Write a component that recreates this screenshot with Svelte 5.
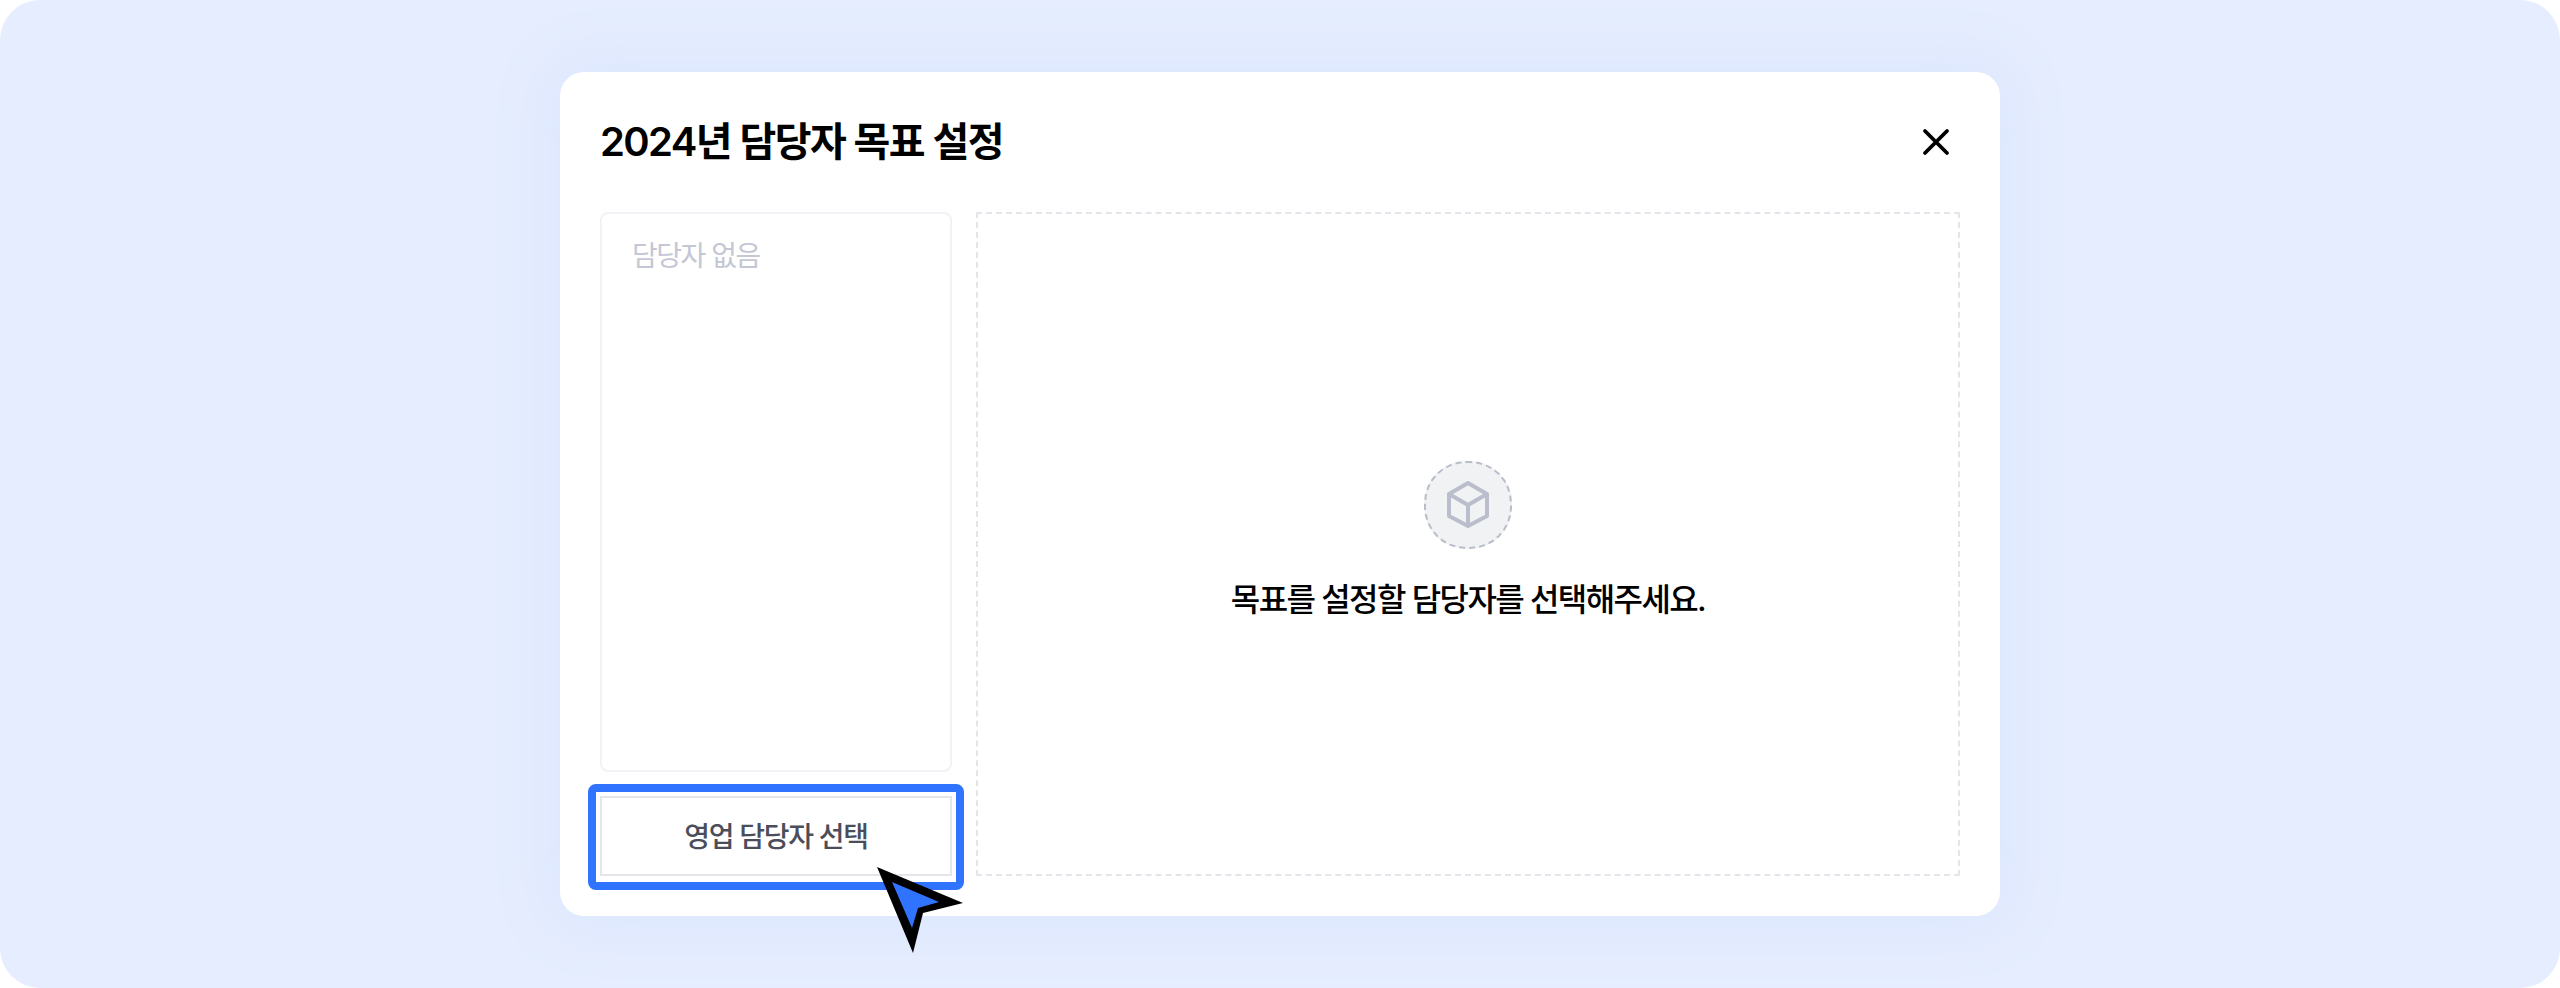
<script lang="ts">
	const title = '2024년 담당자 목표 설정';
</script>

<main class="stage">
	<section class="modal">
		<header>
			<h1>{title}</h1>
			<button class="close" aria-label="닫기">
				<svg width="32" height="32" viewBox="0 0 32 32" fill="none">
					<path d="M5 5 L27 27 M27 5 L5 27" stroke="#000" stroke-width="3.8" stroke-linecap="round" />
				</svg>
			</button>
		</header>

		<div class="body">
			<div class="left">
				<div class="list">담당자 없음</div>
				<button class="pick">영업 담당자 선택</button>
			</div>

			<div class="detail">
				<div class="badge">
					<svg width="46" height="50" viewBox="0 0 46 50" fill="none">
						<path d="M23 3 L42 14 V36 L23 46 L4 36 V14 Z M4 14 L23 25 L42 14 M23 25 V46" stroke="#BABDCB" stroke-width="4" stroke-linejoin="round" />
					</svg>
				</div>
				<p>목표를 설정할 담당자를 선택해주세요.</p>
			</div>
		</div>

		<svg class="cursor" width="100" height="100" viewBox="0 0 100 100">
			<path d="M7 7 L93 43 L53 53 L43 93 Z" fill="#000" />
			<path d="M22 22 L69 42 L48 48 L42 68 Z" fill="#2F73FF" />
		</svg>
	</section>
</main>

<style>
	:global(body) {
		background: #fff;
	}

	.stage {
		width: 2560px;
		height: 988px;
		border-radius: 40px;
		background: #e5edfe;
		display: flex;
		align-items: center;
		justify-content: center;
		font-family: Inter, 'Noto Sans CJK KR', 'Noto Sans', sans-serif;
		overflow: hidden;
	}

	.modal {
		position: relative;
		width: 1440px;
		height: 844px;
		box-sizing: border-box;
		padding: 40px;
		background: #fff;
		border-radius: 24px;
		box-shadow: 0 0 60px 8px #dbe6fe;
		display: flex;
		flex-direction: column;
	}

	header {
		height: 100px;
		display: flex;
		justify-content: space-between;
		align-items: flex-start;
	}

	h1 {
		margin: 0;
		font-size: 40px;
		line-height: 59px;
		font-weight: 600;
		letter-spacing: -1.6px;
		color: #000;
	}

	.close {
		border: 0;
		padding: 0;
		background: none;
		margin: 14px 8px 0 0;
		display: flex;
	}

	.body {
		flex: 1;
		display: flex;
		gap: 24px;
		min-height: 0;
	}

	.left {
		width: 352px;
		display: flex;
		flex-direction: column;
		gap: 24px;
	}

	.list {
		flex: 1;
		box-sizing: border-box;
		border: 2px solid #f1f2f5;
		border-radius: 8px;
		padding: 24px 30px;
		font-size: 28px;
		line-height: 36px;
		letter-spacing: -1.5px;
		color: #c4c7d4;
	}

	.pick {
		position: relative;
		height: 80px;
		box-sizing: border-box;
		border: 2px solid #e4e5eb;
		background: #fff;
		font-family: inherit;
		font-size: 28px;
		font-weight: 500;
		letter-spacing: -1.3px;
		color: #4b4e5a;
		padding: 0 0 3px;
	}

	.pick::after {
		content: '';
		position: absolute;
		inset: -14px -14px -16px;
		border: 8px solid #2f73ff;
		border-radius: 8px;
	}

	.detail {
		flex: 1;
		box-sizing: border-box;
		border: 2px dashed #e4e5eb;
		display: flex;
		flex-direction: column;
		align-items: center;
		justify-content: center;
		gap: 29px;
		padding-bottom: 5px;
	}

	.badge {
		width: 88px;
		height: 88px;
		box-sizing: border-box;
		border: 2px dashed #b9bcc9;
		border-radius: 48%;
		background: #f1f2f4;
		display: flex;
		align-items: center;
		justify-content: center;
	}

	p {
		margin: 0;
		font-size: 32px;
		line-height: 44px;
		font-weight: 500;
		letter-spacing: -1.6px;
		color: #000;
	}

	.cursor {
		position: absolute;
		left: 310px;
		top: 788px;
	}
</style>
